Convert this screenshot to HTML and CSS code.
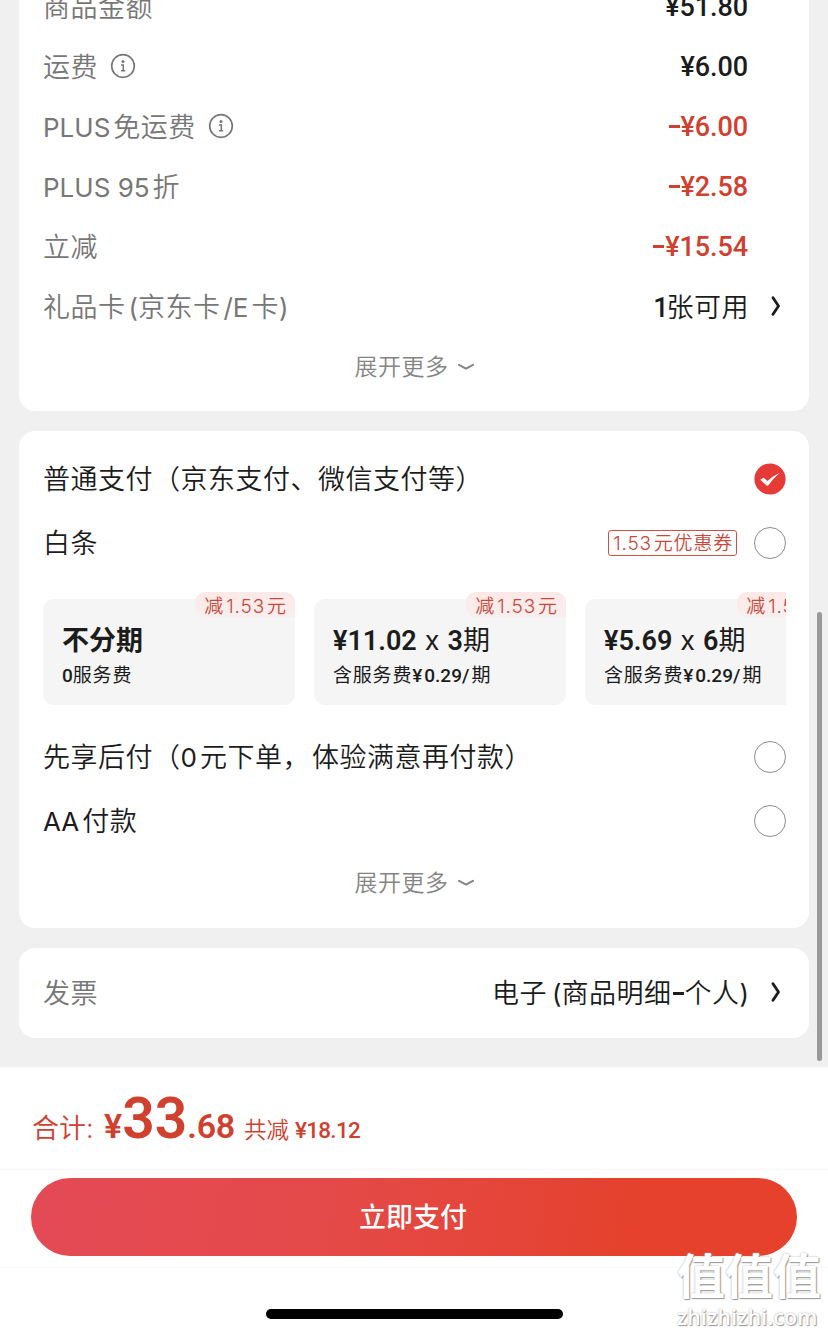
FILE: index.html
```html
<!DOCTYPE html>
<html lang="zh-CN">
<head>
    <meta charset="UTF-8">
    <meta name="viewport" content="width=device-width, initial-scale=1.0">
    <title>确认订单</title>
    <link rel="stylesheet" href="styles.css">
</head>
<body>
    <svg class="sprite">
        <symbol id="info" viewBox="0 0 26 26">
            <circle cx="13" cy="13" r="11.3" fill="none" stroke="currentColor" stroke-width="1.7"/>
            <circle cx="13" cy="8.5" r="1.5" fill="currentColor"/>
            <path d="M11 12h2.3v5.700M11 17.700h4.200" fill="none" stroke="currentColor" stroke-width="1.5"/>
        </symbol>
        <symbol id="down" viewBox="0 0 16 8">
            <path d="M1 1.8L8 5.6L15 1.8" fill="none" stroke="currentColor" stroke-width="2" stroke-linecap="round" stroke-linejoin="round"/>
        </symbol>
        <symbol id="right" viewBox="0 0 10 20">
            <path d="M2 1.7L7.5 10L2 18.3" fill="none" stroke="currentColor" stroke-width="2.8" stroke-linecap="round" stroke-linejoin="round"/>
        </symbol>
    </svg>

    <main class="page">
        <section class="card price-card">
            <div class="row"><span class="label">商品金额</span><span class="amount">¥51.80</span></div>
            <div class="row"><span class="label">运费</span><svg class="info"><use href="#info"/></svg><span class="amount">¥6.00</span></div>
            <div class="row"><span class="label"><em>PLUS</em><i class="sp"></i>免运费</span><svg class="info"><use href="#info"/></svg><span class="amount red"><i class="dash"></i>¥6.00</span></div>
            <div class="row"><span class="label"><em>PLUS 95</em><i class="sp"></i>折</span><span class="amount red"><i class="dash"></i>¥2.58</span></div>
            <div class="row"><span class="label">立减</span><span class="amount red"><i class="dash"></i>¥15.54</span></div>
            <div class="row"><span class="label">礼品卡<i class="sp"></i><em>(</em>京东卡<i class="sp"></i><em>/E</em><i class="sp"></i>卡<em>)</em></span><span class="value"><b class="count">1</b>张可用</span><svg class="arrow"><use href="#right"/></svg></div>
            <div class="more"><span>展开更多</span><svg class="down"><use href="#down"/></svg></div>
        </section>

        <section class="card pay-card">
            <div class="row pay-row">
                <span class="name">普通支付（京东支付、微信支付等）</span>
                <svg class="radio" viewBox="0 0 32 32">
                    <circle cx="16" cy="16" r="15.6" fill="#e53a35"/>
                    <path d="M6.2 16.700l3.300-2 4.100 3.400q4.800-5 12.200-8.400-6.700 5.800-11.600 12.800-.8.7-1.600 0z" fill="#fff"/>
                </svg>
            </div>
            <div class="row pay-row">
                <span class="name">白条</span>
                <span class="coupon">1.53<i></i>元优惠券</span>
                <span class="radio empty"></span>
            </div>
            <div class="plans">
                <div class="plan">
                    <span class="tag">减<i></i>1.53<i></i>元</span>
                    <div class="plan-title bold">不分期</div>
                    <div class="plan-fee"><b>0</b>服务费</div>
                </div>
                <div class="plan">
                    <span class="tag">减<i></i>1.53<i></i>元</span>
                    <div class="plan-title"><b>¥11.02</b><span class="times">x</span><b>3</b>期</div>
                    <div class="plan-fee">含服务费<b>¥<i></i>0.29/</b><i></i>期</div>
                </div>
                <div class="plan">
                    <span class="tag">减<i></i>1.53<i></i>元</span>
                    <div class="plan-title"><b>¥5.69</b><span class="times">x</span><b>6</b>期</div>
                    <div class="plan-fee">含服务费<b>¥<i></i>0.29/</b><i></i>期</div>
                </div>
            </div>
            <div class="row pay-row">
                <span class="name">先享后付（<em>0</em><i class="sp"></i>元下单，<i></i>体验满意再付款）</span>
                <span class="radio empty"></span>
            </div>
            <div class="row pay-row">
                <span class="name"><em>AA</em><i class="sp"></i>付款</span>
                <span class="radio empty"></span>
            </div>
            <div class="more"><span>展开更多</span><svg class="down"><use href="#down"/></svg></div>
        </section>

        <section class="card invoice-card">
            <div class="row"><span class="label">发票</span><span class="value">电子<i class="sp"></i><i></i><em>(</em>商品明细<i class="dash"></i>个人<em>)</em></span><svg class="arrow"><use href="#right"/></svg></div>
        </section>
    </main>

    <footer class="footer">
        <div class="total">
            <span class="total-label">合计:</span>
            <span class="yen">¥</span><span class="int">33</span><span class="dec">.68</span>
            <span class="saved">共减</span><span class="saved-num">¥18.12</span>
        </div>
        <div class="submit-wrap"><button class="submit">立即支付</button></div>
    </footer>

    <div class="scrollbar"></div>
    <div class="home-bar"></div>
    <div class="watermark">
        <div class="wm-name">值值值</div>
        <div class="wm-url">zhizhizhi.com</div>
    </div>
</body>
</html>
```
FILE: styles.css
```css
* {
    margin: 0;
    padding: 0;
    box-sizing: border-box;
}

body {
    width: 828px;
    height: 1334px;
    overflow: hidden;
    position: relative;
    display: flex;
    flex-direction: column;
    background: #f0f0f0;
    color: #1c1c1c;
    font-family: Inter, "Noto Sans CJK SC", sans-serif;
    font-size: 27px;
    font-weight: 350;
    letter-spacing: .5px;
    white-space: nowrap;
}

.sprite {
    display: none;
}

i {
    display: inline-block;
    width: 2px;
}

.sp {
    width: 3px;
}

em {
    font-size: 26px;
    font-style: normal;
    font-weight: 400;
    letter-spacing: 0;
}

b {
    font-family: Roboto, "Noto Sans CJK SC", sans-serif;
    font-weight: 500;
    letter-spacing: 0;
}

.page {
    height: 1067px;
    padding: 0 19px;
    display: flex;
    flex-direction: column;
    gap: 20px;
    flex-shrink: 0;
}

.card {
    background: #fff;
    border-radius: 16px;
    padding: 0 24px;
    flex-shrink: 0;
}

.price-card {
    margin-top: -23px;
    height: 434px;
}

.row {
    height: 60px;
    display: flex;
    align-items: center;
}

.label,
.value,
.name {
    padding-bottom: 3px;
}

.label {
    color: #777;
}

.info {
    width: 26px;
    height: 26px;
    margin-left: 12px;
    margin-bottom: 2px;
    color: #777;
}

.amount {
    margin-left: auto;
    margin-right: 37px;
    font-family: Roboto, sans-serif;
    font-size: 27px;
    font-weight: 500;
    letter-spacing: -.1px;
}

.red {
    color: #d0402f;
}

.dash {
    width: 11px;
    height: 3px;
    margin: 0 1px;
    background: currentColor;
    vertical-align: 8px;
}

.value {
    margin-left: auto;
}

.count {
    letter-spacing: -2px;
}

.arrow {
    width: 10px;
    height: 20px;
    margin-left: 22px;
    margin-right: 4px;
    margin-bottom: 2px;
}

.more {
    height: 60px;
    display: flex;
    align-items: center;
    justify-content: center;
    gap: 9px;
    color: #858585;
    font-size: 23px;
}

.more span {
    padding-bottom: 4px;
}

.down {
    width: 16px;
    height: 8px;
}

.pay-card {
    height: 497px;
    padding-top: 16px;
}

.pay-row {
    height: 64px;
}

.radio {
    width: 32px;
    height: 32px;
    margin-left: auto;
    margin-right: -1px;
    margin-bottom: 1px;
    flex-shrink: 0;
}

.empty {
    border: 1.5px solid #8d8d8d;
    border-radius: 50%;
}

.coupon {
    height: 26px;
    margin-left: auto;
    padding: 0 3px 0 4px;
    border: 1px solid #cf5145;
    border-radius: 3px;
    color: #c9483a;
    font-size: 19px;
    letter-spacing: .8px;
    line-height: 26px;
}

.coupon + .radio {
    margin-left: 17px;
}

.plans {
    height: 150px;
    margin-right: -1px;
    padding-top: 24px;
    display: flex;
    gap: 19px;
    overflow: hidden;
}

.plan {
    position: relative;
    width: 252px;
    height: 106px;
    padding: 24px 19px 0;
    border-radius: 11px;
    background: #f5f5f5;
    flex-shrink: 0;
}

.tag {
    position: absolute;
    top: -7px;
    right: 0;
    height: 25px;
    padding: 0 8px 0 9px;
    border-radius: 10px 10px 0 10px;
    background: linear-gradient(#fde9e7, #f8efee);
    color: #c9483a;
    font-size: 19px;
    letter-spacing: .9px;
    line-height: 29px;
}

.plan-title {
    height: 37px;
    font-size: 27px;
    line-height: 36px;
    font-weight: 400;
    letter-spacing: 0;
}

.bold {
    font-weight: 700;
}

.plan-title b {
    font-size: 27px;
    font-weight: 600;
}

.times {
    margin: 0 8px;
}

.plan-fee {
    font-size: 19px;
    line-height: 32px;
    letter-spacing: .8px;
    font-weight: 400;
}

.plan-fee b {
    letter-spacing: 0;
}

.invoice-card {
    height: 90px;
    padding-top: 15px;
}

.footer {
    height: 267px;
    background: #fff;
    flex-shrink: 0;
}

.total {
    height: 103px;
    padding: 22px 0 0 32px;
    display: flex;
    align-items: baseline;
    border-bottom: 1px solid #f8f8f8;
    color: #d0402f;
    letter-spacing: 0;
}

.total-label {
    font-size: 27px;
    width: 72px;
}

.yen,
.int,
.dec,
.saved-num {
    font-family: Roboto, sans-serif;
    font-weight: 600;
}

.yen {
    font-size: 34px;
}

.int {
    font-size: 57px;
    line-height: 60px;
}

.dec {
    font-size: 34px;
    letter-spacing: -.3px;
}

.saved {
    margin-left: 9px;
    font-size: 22.5px;
}

.saved-num {
    margin-left: 6px;
    font-size: 22.5px;
    font-weight: 500;
    letter-spacing: -.7px;
}

.submit-wrap {
    height: 98px;
    padding: 8px 31px 0;
    border-bottom: 1px solid #fafafa;
}

.submit {
    width: 100%;
    height: 78px;
    padding: 0 2px 3px 0;
    border: 0;
    border-radius: 39px;
    background: linear-gradient(100deg, #e44a56 0%, #e44a49 38%, #e5412c 80%);
    color: #fff;
    font: 500 27px "Noto Sans CJK SC", sans-serif;
}

.scrollbar {
    position: absolute;
    top: 612px;
    right: 6px;
    width: 5px;
    height: 449px;
    border-radius: 3px;
    background: #999;
}

.home-bar {
    position: absolute;
    left: 266px;
    bottom: 15px;
    width: 297px;
    height: 10px;
    border-radius: 5px;
    background: #000;
}

.watermark {
    position: absolute;
    left: 677px;
    top: 1249px;
    color: #fff;
    text-shadow: 1px 1px 1px #999, 0 0 2px #aaa;
    letter-spacing: 0;
}

.wm-name {
    font-size: 48px;
    line-height: 56px;
    font-weight: 700;
}

.wm-url {
    font-family: "Open Sans", sans-serif;
    font-size: 21px;
    line-height: 24px;
    font-weight: 600;
    letter-spacing: .3px;
}
```
